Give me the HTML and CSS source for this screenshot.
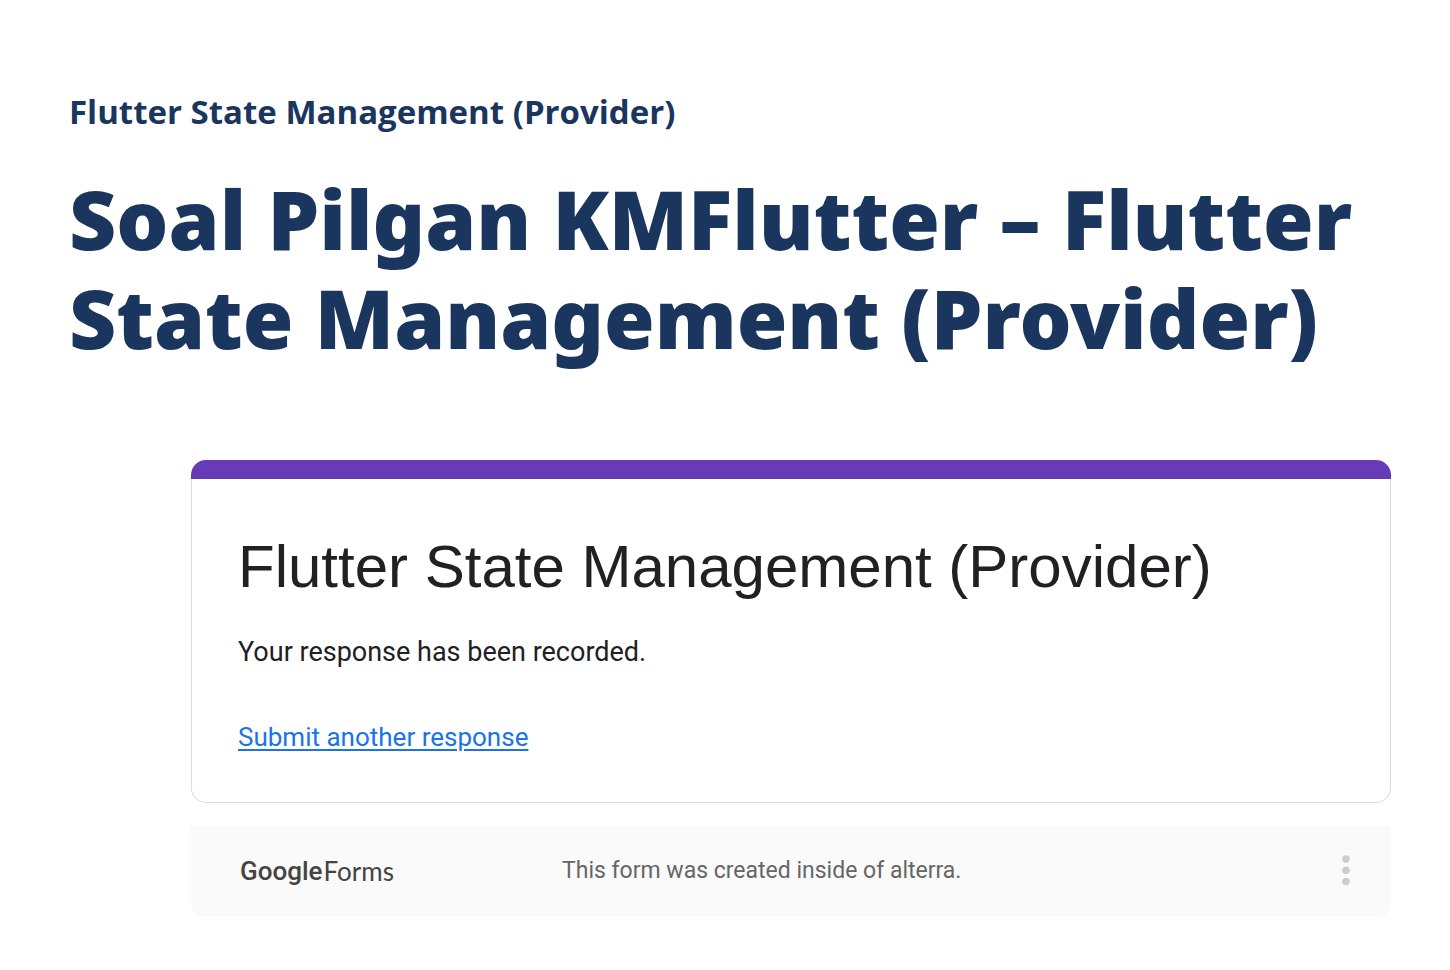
FILE: index.html
```html
<!DOCTYPE html>
<html lang="id">
<head>
<meta charset="utf-8">
<meta name="viewport" content="width=device-width, initial-scale=1">
<title>Flutter State Management (Provider)</title>
<link rel="stylesheet" href="styles.css">
</head>
<body>
<header class="lesson">
  <p class="lesson-topic">Flutter State Management (Provider)</p>
  <h1 class="lesson-title">Soal Pilgan KMFlutter – Flutter State Management (Provider)</h1>
</header>
<main class="form">
  <section class="card">
    <div class="card-bar"></div>
    <div class="card-body">
      <h2 class="card-title">Flutter State Management (Provider)</h2>
      <p class="card-message">Your response has been recorded.</p>
      <a class="card-link" href="#again">Submit another response</a>
    </div>
  </section>
  <footer class="form-footer">
    <div class="brand"><span class="brand-google">Google</span><span class="brand-forms">Forms</span></div>
    <p class="origin">This form was created inside of alterra.</p>
    <button class="more" type="button" aria-label="More options">
      <svg width="8" height="32" viewBox="0 0 8 32" fill="currentColor" aria-hidden="true"><circle cx="4" cy="4" r="3.8"/><circle cx="4" cy="15.2" r="3.8"/><circle cx="4" cy="26.5" r="3.8"/></svg>
    </button>
  </footer>
</main>
</body>
</html>
```
FILE: styles.css
```css
* {
  box-sizing: border-box;
}

body {
  margin: 0;
  padding: 88px 59px 54px 69px;
  background: #fff;
  font-family: Roboto, sans-serif;
}

h1, h2, p {
  margin: 0;
}

.lesson {
  color: #1a355e;
}

.lesson-topic {
  font: 700 33px/48px "Open Sans", sans-serif;
}

.lesson-title {
  margin-top: 33px;
  font: 900 82px/99px "Noto Sans", sans-serif;
}

.form {
  margin: 93px 0 0 122px;
}

.card-bar {
  height: 19px;
  border-radius: 15px 15px 0 0;
  background: #673ab7;
}

.card-body {
  padding: 50px 46px 45px;
  border: 1px solid #dadce0;
  border-top: 0;
  border-radius: 0 0 15px 15px;
  color: #202124;
}

.card-title {
  font: 400 60px/76px "Liberation Sans", Arial, sans-serif;
}

.card-message {
  margin-top: 27px;
  font-size: 27px;
  line-height: 40px;
}

.card-link {
  display: inline-block;
  margin-top: 45px;
  color: #1a73e8;
  font-size: 26px;
  line-height: 40px;
  text-underline-offset: 3px;
}

.form-footer {
  display: flex;
  align-items: center;
  margin-top: 23px;
  padding: 25px 41px 25px 49px;
  border-radius: 0 0 12px 12px;
  background: #fafafa;
}

.brand {
  display: flex;
  gap: 1px;
  width: 322px;
  color: #444;
  font-size: 26px;
  line-height: 38px;
}

.brand-google {
  font-weight: 500;
}

.brand-forms {
  font-family: Lato, sans-serif;
}

.origin {
  flex: 1;
  color: #666;
  font-size: 23px;
  line-height: 40px;
}

.more {
  display: flex;
  padding: 0;
  border: 0;
  background: none;
  color: #ccc;
}
```
